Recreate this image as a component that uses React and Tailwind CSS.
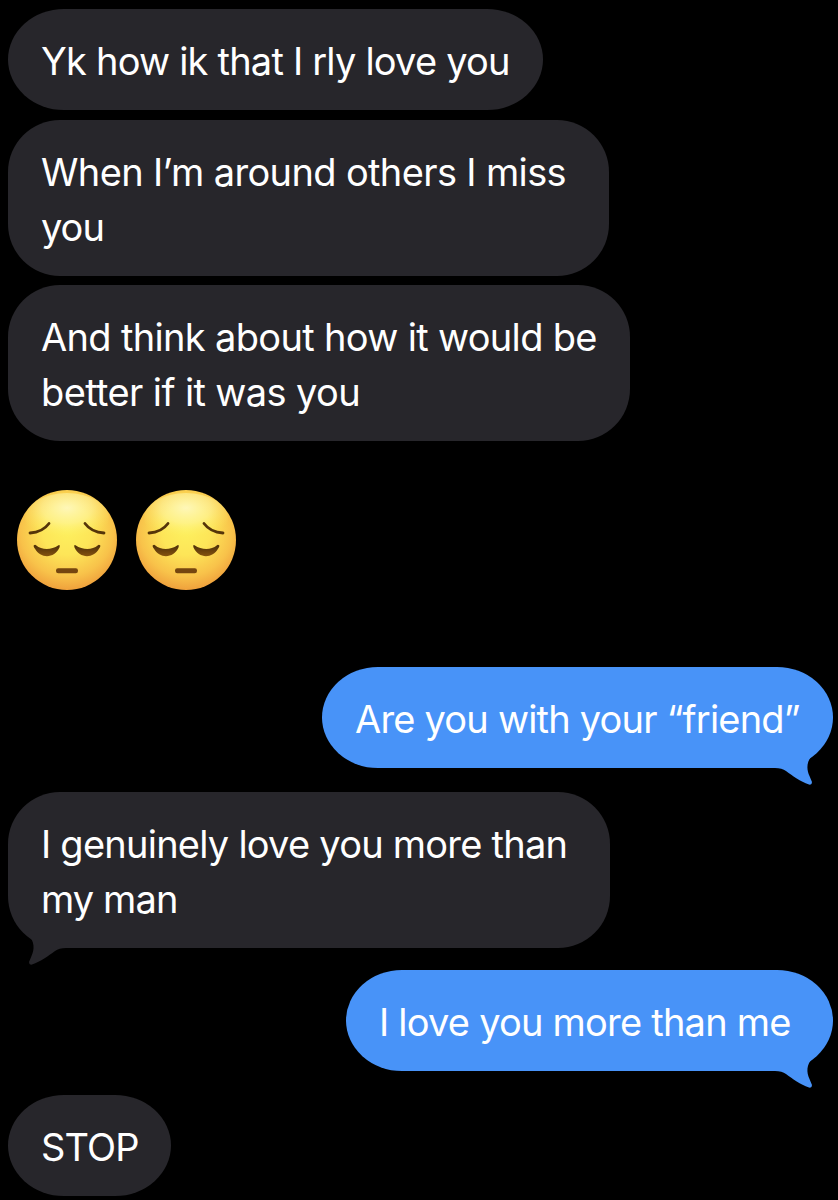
import React from "react";
import clsx from "clsx";

const messages = [
  {
    id: 1,
    shape: "mt-[9px] w-[535px] rounded-[56px/50.5px]",
    lines: [{ text: "Yk how ik that I rly love you", spacing: "tracking-[-0.79px]" }],
  },
  {
    id: 2,
    shape: "mt-[10px] w-[601px] rounded-[52px]",
    lines: [
      { text: "When I’m around others I miss", spacing: "tracking-[-0.64px]" },
      { text: "you", spacing: "tracking-[-1px]" },
    ],
  },
  {
    id: 3,
    shape: "mt-[9px] w-[622px] rounded-[52px]",
    lines: [
      { text: "And think about how it would be", spacing: "tracking-[-0.67px]" },
      { text: "better if it was you", spacing: "tracking-[-0.62px]" },
    ],
  },
  { id: 4, emojis: 2 },
  {
    id: 5,
    mine: true,
    tail: true,
    shape: "mt-[77px] w-[511px] rounded-[56px/50.5px]",
    lines: [{ text: "Are you with your “friend”", spacing: "tracking-[-0.8px]" }],
  },
  {
    id: 6,
    tail: true,
    shape: "mt-[24px] w-[602px] rounded-[52px]",
    lines: [
      { text: "I genuinely love you more than", spacing: "tracking-[-0.76px]" },
      { text: "my man", spacing: "tracking-[-0.9px]" },
    ],
  },
  {
    id: 7,
    mine: true,
    tail: true,
    shape: "mt-[22px] w-[487px] rounded-[56px/50.5px]",
    lines: [{ text: "I love you more than me", spacing: "tracking-[-0.78px]" }],
  },
  {
    id: 8,
    shape: "mt-[24px] w-[163px] rounded-[56px/50.5px]",
    lines: [{ text: "STOP", spacing: "tracking-[-0.9px]" }],
  },
];

const Tail = ({ mine }) => (
  <svg
    viewBox="0 0 40 36"
    className={clsx(
      "absolute -bottom-[18px] h-9 w-10",
      mine ? "right-[18px] text-[#4893f8]" : "left-[18px] -scale-x-100 text-[#27262b]"
    )}
    fill="currentColor"
  >
    <path d="M0 0H34L40 2L38 5C31 11 31.500 20 34.500 26Q35.500 28.500 37 32Q37 35.200 34 34.500C25 31.500 18 26 11 21Q7 18 0 18Z" />
  </svg>
);

const Bubble = ({ message }) => (
  <div
    className={clsx(
      "relative px-[33px] pt-[25px] pb-[21px] text-[38px] leading-[55px] whitespace-nowrap text-white",
      message.mine ? "mr-[5px] self-end bg-[#4893f8]" : "ml-2 self-start bg-[#27262b]",
      message.shape
    )}
  >
    {message.tail && <Tail mine={message.mine} />}
    {message.lines.map((line) => (
      <p key={line.text} className={clsx("relative", line.spacing)}>
        {line.text}
      </p>
    ))}
  </div>
);

const PensiveFace = () => (
  <svg viewBox="0 0 100 100" className="size-[100px]">
    <defs>
      <radialGradient id="skin" cx="0.5" cy="0.4" r="0.62">
        <stop offset="0" stopColor="#fdf05e" />
        <stop offset="0.4" stopColor="#fde558" />
        <stop offset="0.75" stopColor="#f8c24a" />
        <stop offset="1" stopColor="#ee9c3a" />
      </radialGradient>
      <radialGradient id="shine" cx="0.5" cy="0.3" r="0.6">
        <stop offset="0" stopColor="#fffbd0" stopOpacity="0.8" />
        <stop offset="0.5" stopColor="#fff9b0" stopOpacity="0.5" />
        <stop offset="1" stopColor="#fff05e" stopOpacity="0" />
      </radialGradient>
      <linearGradient id="lid" x1="0" y1="0" x2="0" y2="1">
        <stop offset="0" stopColor="#4a2d09" />
        <stop offset="1" stopColor="#85530f" />
      </linearGradient>
    </defs>
    <circle cx="50" cy="50" r="50" fill="url(#skin)" />
    <ellipse cx="50" cy="28" rx="42" ry="25" fill="url(#shine)" />
    {/* brows */}
    <g fill="none" stroke="#553509" strokeWidth="2.8" strokeLinecap="round">
      <path d="M32 33.500C28 39 21 42.500 13 43" />
      <path d="M68 33.500C72 39 79 42.500 87 43" />
    </g>
    {/* closed eyes */}
    <g fill="url(#lid)">
      <path d="M17.500 55C15.800 55.400 17 57.300 18 58.800C23.500 68.800 37.500 68.800 42.500 57.500Q43.500 54.300 41.500 55.200C34 60.300 25 60.300 19 55.200Q18.300 54.600 17.500 55Z" />
      <path d="M82.500 55C84.200 55.400 83 57.300 82 58.800C76.500 68.800 62.500 68.800 57.500 57.500Q56.500 54.300 58.500 55.200C66 60.300 75 60.300 81 55.200Q81.700 54.600 82.500 55Z" />
    </g>
    <rect x="39" y="78.300" width="22" height="5" rx="2.200" fill="#75450f" />
  </svg>
);

const App = () => {
  return (
    <main className="flex h-[1200px] w-full flex-col overflow-hidden bg-black font-['Inter',sans-serif]">
      {messages.map((message) =>
        message.emojis ? (
          <div key={message.id} className="mt-[49px] ml-[17px] flex gap-[19px]">
            {Array.from({ length: message.emojis }, (_, i) => (
              <PensiveFace key={i} />
            ))}
          </div>
        ) : (
          <Bubble key={message.id} message={message} />
        )
      )}
    </main>
  );
};

export default App;
